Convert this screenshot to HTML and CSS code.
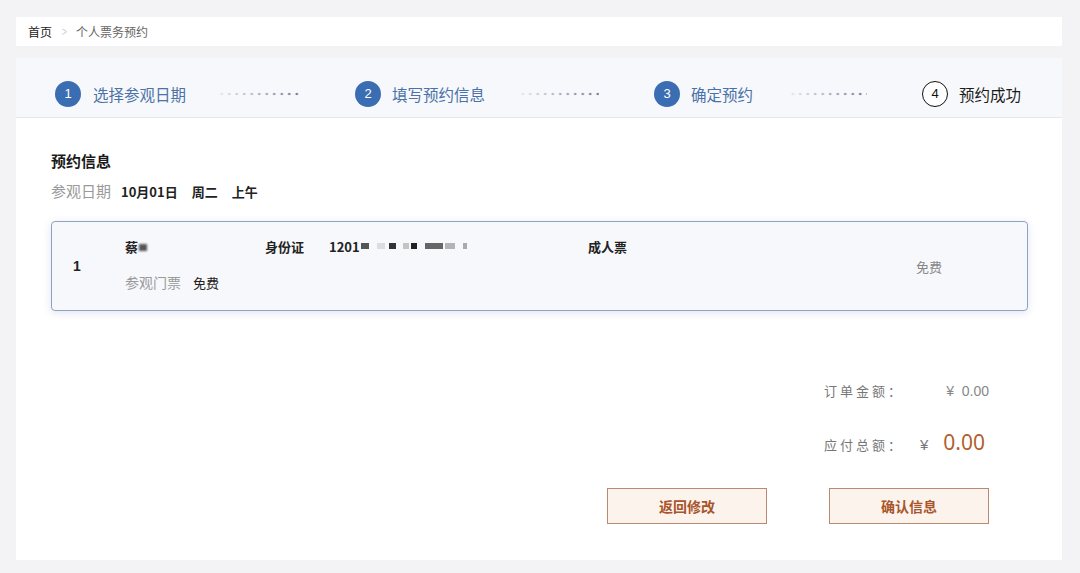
FILE: index.html
```html
<!DOCTYPE html>
<html lang = "zh-CN">
<head>
    <meta charset = "UTF-8">
    <meta name    = "viewport" content = "width=device-width, initial-scale=1.0">
    <title>个人票务预约</title>
    <link rel="stylesheet" href="styles.css">
</head>
<body>
    <nav class = "crumbs">
        <span class = "crumb-home">首页</span>
        <span class = "crumb-sep">&gt;</span>
        <span class = "crumb-here">个人票务预约</span>
    </nav>

    <div class = "panel">
        <div class = "steps">
            <div class = "step step-1">
                <span class = "step-num">1</span>
                <span class = "step-label">选择参观日期</span>
                <span class = "step-dots"></span>
            </div>
            <div class = "step step-2">
                <span class = "step-num">2</span>
                <span class = "step-label">填写预约信息</span>
                <span class = "step-dots"></span>
            </div>
            <div class = "step step-3">
                <span class = "step-num">3</span>
                <span class = "step-label">确定预约</span>
                <span class = "step-dots"></span>
            </div>
            <div class = "step step-4 current">
                <span class = "step-num">4</span>
                <span class = "step-label">预约成功</span>
            </div>
        </div>

        <main class = "content">
            <h2 class = "title">预约信息</h2>
            <div class = "visit-date">
                <span class = "muted">参观日期</span>
                <span class = "strong">10月01日</span>
                <span class = "strong">周二</span>
                <span class = "strong">上午</span>
            </div>

            <div class = "ticket">
                <div class = "ticket-index">1</div>
                <div class = "ticket-info">
                    <div class = "ticket-row">
                        <span class = "t-name">蔡<i class = "blur blur-name"></i></span>
                        <span class = "t-idlabel">身份证</span>
                        <span class = "t-idnum">1201<i class = "mosaic"><b class = "m1"></b><b class = "m2"></b><b class = "m3"></b><b class = "m4"></b><b class = "m5"></b><b class = "m6"></b><b class = "m7"></b><b class = "m8"></b></i></span>
                        <span class = "t-type">成人票</span>
                    </div>
                    <div class = "ticket-row">
                        <span class = "muted">参观门票</span>
                        <span class = "t-free">免费</span>
                    </div>
                </div>
                <div class = "ticket-price">免费</div>
            </div>

            <div class = "summary">
                <div class = "sum-row">
                    <span class = "sum-label">订单金额：</span>
                    <span class = "sum-value">¥&nbsp;&nbsp;0.00</span>
                </div>
                <div class = "sum-row total">
                    <span class = "sum-label">应付总额：</span>
                    <span class = "sum-value"><span class = "yen">¥</span><span class = "amount">0.00</span></span>
                </div>
            </div>

            <div class = "actions">
                <button class = "btn">返回修改</button>
                <button class = "btn">确认信息</button>
            </div>
        </main>
    </div>
</body>
</html>
```

FILE: styles.css
```css
*{
    margin    : 0;
    padding   : 0;
    box-sizing: border-box;
}

body{
    font-family     : "Noto Sans CJK SC", "Noto Sans", sans-serif;
    background-color: #f3f3f5;
    padding         : 17px 18px 0 16px;
    color           : #222;
}

.crumbs{
    display         : flex;
    align-items     : center;
    height          : 29px;
    padding-left    : 12px;
    background-color: #ffffff;
    font-size       : 12px;
}
.crumb-home{
    color: #222;
}
.crumb-sep{
    color      : #ccc;
    margin     : 0 8px 0 9px;
    font-family: "Liberation Sans", sans-serif;
    transform  : scaleX(.7);
}
.crumb-here{
    color: #666;
}

.panel{
    margin-top      : 12px;
    background-color: #ffffff;
}

.steps{
    display         : flex;
    align-items     : center;
    gap             : 55px;
    height          : 60px;
    padding-top     : 12px;
    padding-left    : 39px;
    background-color: #f7f8fb;
    border-bottom   : 1px solid #e4e7ee;
}

.step{
    display    : flex;
    align-items: center;
}
.step-num{
    display         : flex;
    align-items     : center;
    justify-content : center;
    width           : 26px;
    height          : 26px;
    border-radius   : 50%;
    background-color: #3b6db3;
    color           : #ffffff;
    font-family     : "Liberation Sans", sans-serif;
    font-size       : 13px;
}
.step-label{
    margin-left: 11px;
    font-size  : 15.5px;
    color      : #4a72a8;
}
.step-dots{
    width              : 82px;
    height             : 4px;
    margin-left        : 32px;
    background-image   : radial-gradient(circle, #6f7d96 1.2px, transparent 1.6px);
    background-size    : 7.5px 4px;
    -webkit-mask-image : linear-gradient(to right, rgba(0, 0, 0, .12), #000);
    mask-image         : linear-gradient(to right, rgba(0, 0, 0, .12), #000);
}
.step-1 .step-label{
    margin-left: 12px;
}
.step-2 .step-dots{
    margin-left: 34px;
    width      : 80px;
}
.step-3 .step-dots{
    margin-left: 36px;
    width      : 78px;
}
.step.current .step-num{
    background-color: #ffffff;
    border          : 1.5px solid #111;
    color           : #111;
}
.step.current .step-label{
    color: #1c1c1c;
}

.content{
    padding: 33px 34px 36px 35px;
}

.title{
    font-size  : 15px;
    font-weight: 600;
    line-height: 20px;
    color      : #1a1a1a;
}

.visit-date{
    display    : flex;
    align-items: baseline;
    margin-top : 10px;
    line-height: 20px;
}
.muted{
    color    : #9a9a9a;
    font-size: 14px;
}
.visit-date .muted{
    font-size   : 15px;
    margin-right: 10px;
}
.visit-date .strong{
    font-size   : 13px;
    font-weight : 600;
    margin-right: 14px;
}

.ticket{
    display         : flex;
    align-items     : center;
    height          : 90px;
    margin-top      : 19px;
    padding-left    : 21px;
    border          : 1px solid #8ea2c6;
    border-radius   : 4px;
    background-color: #f7f8fc;
    box-shadow      : 0 2px 8px rgba(70, 90, 150, .15);
}
.ticket-index{
    width      : 52px;
    font-size  : 14px;
    font-weight: 700;
    font-family: "Liberation Sans", sans-serif;
}
.ticket-info{
    display       : flex;
    flex-direction: column;
    gap           : 16px;
    padding-bottom: 4px;
}
.ticket-row{
    display    : flex;
    align-items: center;
    height     : 20px;
    font-size  : 13px;
}
.t-name{
    width      : 140px;
    font-weight: 600;
}
.t-idlabel{
    width      : 64px;
    font-weight: 600;
}
.t-idnum{
    display    : flex;
    align-items: center;
    width      : 259px;
    font-weight: 600;
}
.t-type{
    font-weight: 600;
}
.t-free{
    margin-left: 12px;
    color      : #222;
}
.ticket-price{
    margin-left  : auto;
    padding-right: 85px;
    font-size    : 13px;
    color        : #888;
}

.blur{
    display: inline-block;
}
.blur-name{
    width           : 8px;
    height          : 7px;
    margin-left     : 1px;
    background-color: #555;
    filter          : blur(.8px);
    vertical-align  : middle;
}
.mosaic{
    display    : inline-flex;
    align-items: center;
    height     : 10px;
    margin-left: 1px;
    filter     : blur(.5px);
}
.mosaic b{
    display: block;
    height : 6px;
}
.m1{ width: 8px;  background: #555; margin-right: 8px; }
.m2{ width: 8px;  background: #ddd; margin-right: 4px; }
.m3{ width: 7px;  background: #333; margin-right: 7px; }
.m4{ width: 6px;  background: #c4c4c4; margin-right: 2px; }
.m5{ width: 6px;  background: #222; margin-right: 8px; }
.m6{ width: 18px; background: #666; margin-right: 2px; }
.m7{ width: 10px; background: #b4b4b4; margin-right: 8px; }
.m8{ width: 4px;  background: #aaa; }

.summary{
    display       : flex;
    flex-direction: column;
    align-items   : flex-end;
    gap           : 29px;
    margin-top    : 70px;
    margin-right  : 39px;
}
.sum-row{
    display    : flex;
    align-items: baseline;
    width      : 165px;
    line-height: 20px;
}
.sum-label{
    font-size     : 13px;
    letter-spacing: 3px;
    color         : #777;
}
.sum-value{
    margin-left: auto;
    font-size  : 14px;
    color      : #888;
    font-family: "Liberation Sans", sans-serif;
}
.total{
    line-height: 24px;
}
.total .yen{
    margin-right: 15px;
    font-size   : 15px;
    color       : #777;
}
.total .amount{
    margin-right: 4px;
    font-size   : 21px;
    color       : #b35f2c;
    font-family : "Noto Sans", sans-serif;
}

.actions{
    display        : flex;
    justify-content: flex-end;
    gap            : 62px;
    margin-top     : 31px;
    margin-right   : 39px;
}
.btn{
    width           : 160px;
    height          : 36px;
    border          : 1px solid #b98a72;
    background-color: #fdf3ed;
    color           : #a8552b;
    font-family     : "Noto Sans CJK SC", sans-serif;
    font-size       : 14px;
    font-weight     : 600;
}
```
